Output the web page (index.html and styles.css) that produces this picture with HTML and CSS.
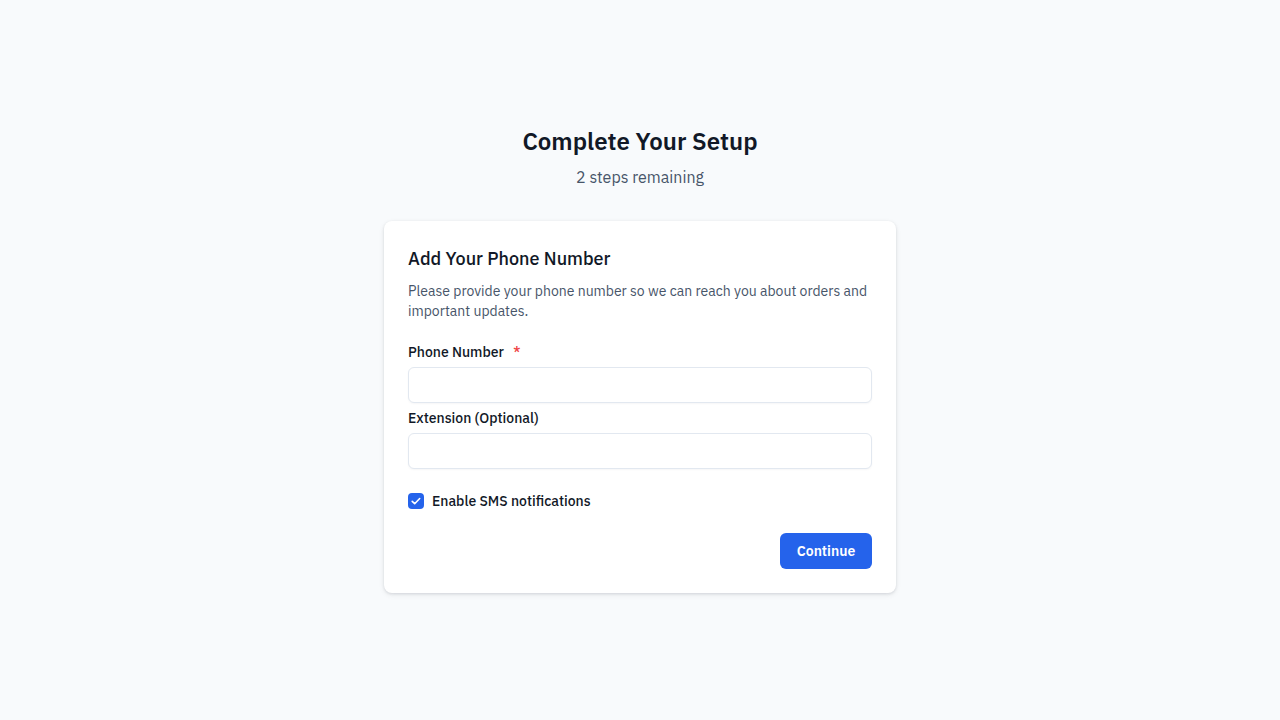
FILE: index.html
```html
<!DOCTYPE html>
<html lang="en">
<head>
<meta charset="utf-8">
<title>Complete Your Setup</title>
<link rel="stylesheet" href="styles.css">
</head>
<body>
<main class="page">
  <div class="wrap">
    <header class="head">
      <h1 class="title">Complete Your Setup</h1>
      <p class="subtitle">2 steps remaining</p>
    </header>
    <section class="card">
      <h2 class="card-title">Add Your Phone Number</h2>
      <p class="card-desc">Please provide your phone number so we can reach you about orders and important updates.</p>
      <div class="fields">
        <div class="field">
          <label class="label" for="phone">Phone Number <span class="req">*</span></label>
          <input class="input" id="phone" type="text">
        </div>
        <div class="field">
          <label class="label" for="ext">Extension (Optional)</label>
          <input class="input" id="ext" type="text">
        </div>
      </div>
      <label class="check-row">
        <span class="checkbox"><svg viewBox="0 0 16 16" width="16" height="16"><path d="M4.2 8.3l2.5 2.4 5-5.2" fill="none" stroke="#fff" stroke-width="1.6" stroke-linecap="round" stroke-linejoin="round"/></svg></span>
        <span class="check-label">Enable SMS notifications</span>
      </label>
      <div class="actions">
        <button class="btn" type="button">Continue</button>
      </div>
    </section>
  </div>
</main>
</body>
</html>
```
FILE: styles.css
```css
* { box-sizing: border-box; }
html, body { margin: 0; padding: 0; }
body {
  background: #f8fafc;
  font-family: "IBM Plex Sans", Inter, "Noto Sans", sans-serif;
  color: #0f172a;
}
.page {
  min-height: 720px;
  padding-bottom: 2px;
  display: flex;
  align-items: center;
  justify-content: center;
}
.wrap { width: 512px; }
.head { text-align: center; margin-bottom: 32px; }
.title {
  margin: 0;
  font-size: 24px;
  line-height: 32px;
  font-weight: 600;
  color: #111827;
}
.subtitle {
  margin: 8px 0 0;
  font-size: 16px;
  line-height: 24px;
  color: #475569;
}
.card {
  background: #fff;
  border-radius: 8px;
  padding: 24px;
  box-shadow: 0 1px 3px rgba(15, 23, 42, 0.12), 0 2px 6px rgba(15, 23, 42, 0.06);
}
.card-title {
  margin: 0;
  font-size: 18px;
  line-height: 28px;
  font-weight: 500;
  color: #111827;
}
.card-desc {
  margin: 8px 0 0;
  font-size: 14px;
  line-height: 20px;
  color: #475569;
}
.fields {
  margin-top: 21px;
  display: flex;
  flex-direction: column;
  gap: 5px;
}
.field { display: flex; flex-direction: column; gap: 5px; }
.label {
  font-size: 14px;
  line-height: 20px;
  font-weight: 500;
  color: #111827;
}
.req { color: #ef4444; margin-left: 6px; }
.input {
  height: 36px;
  width: 100%;
  border: 1px solid #e2e8f0;
  border-radius: 6px;
  background: #fff;
  font: inherit;
  padding: 0 12px;
  box-shadow: 0 1px 2px rgba(15, 23, 42, 0.04);
}
.check-row {
  margin-top: 22px;
  display: flex;
  align-items: center;
  gap: 8px;
  line-height: 20px;
}
.checkbox {
  width: 16px;
  height: 16px;
  border-radius: 4px;
  background: #2563eb;
  display: flex;
}
.check-label {
  font-size: 14px;
  font-weight: 500;
  color: #111827;
}
.actions {
  margin-top: 22px;
  display: flex;
  justify-content: flex-end;
}
.btn {
  height: 36px;
  width: 92px;
  border: 0;
  border-radius: 6px;
  background: #2563eb;
  color: #fff;
  font: inherit;
  font-size: 14px;
  font-weight: 600;
}
```
